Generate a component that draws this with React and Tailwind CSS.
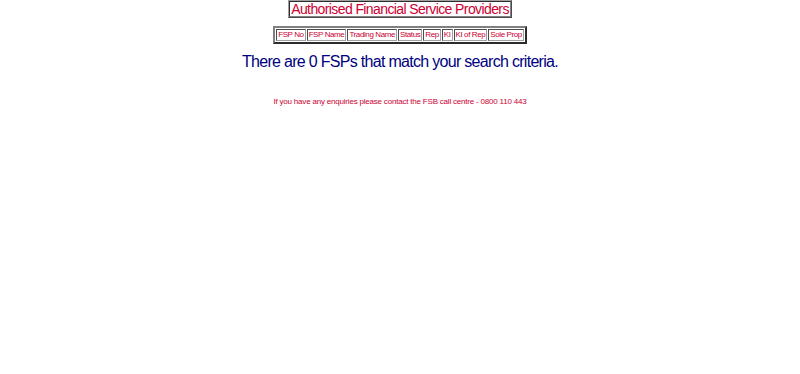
export default function App() {
  const cols = ["FSP No", "FSP Name", "Trading Name", "Status", "Rep", "KI", "KI of Rep", "Sole Prop"];
  return (
    <div className="w-[800px] h-[374px] bg-white font-['Liberation_Sans',Arial,sans-serif] flex flex-col items-center">
      <table className="border border-[#a0a0a0] [border-style:outset] border-separate border-spacing-0">
        <tbody>
          <tr>
            <td className="border border-[#808080] [border-style:inset] px-[1px] text-[14px] leading-[14px] tracking-[-0.6px] text-[#cc0033]">
              Authorised Financial Service Providers
            </td>
          </tr>
        </tbody>
      </table>
      <table className="mt-[8px] border-2 border-[#808080] [border-style:outset] border-separate border-spacing-[1px]">
        <tbody>
          <tr>
            {cols.map((c) => (
              <td key={c} className="border border-[#a0a0a0] [border-style:inset] px-[1px] text-[8px] leading-[10px] tracking-[-0.4px] text-[#cc0033] whitespace-nowrap">
                {c}
              </td>
            ))}
          </tr>
        </tbody>
      </table>
      <p className="mt-[8px] text-[16px] leading-[20px] tracking-[-0.7px] text-[#000080]">There are 0 FSPs that match your search criteria.</p>
      <p className="mt-[25px] text-[8px] leading-[10px] tracking-[-0.2px] text-[#cc0033]">If you have any enquiries please contact the FSB call centre - 0800 110 443</p>
    </div>
  );
}
